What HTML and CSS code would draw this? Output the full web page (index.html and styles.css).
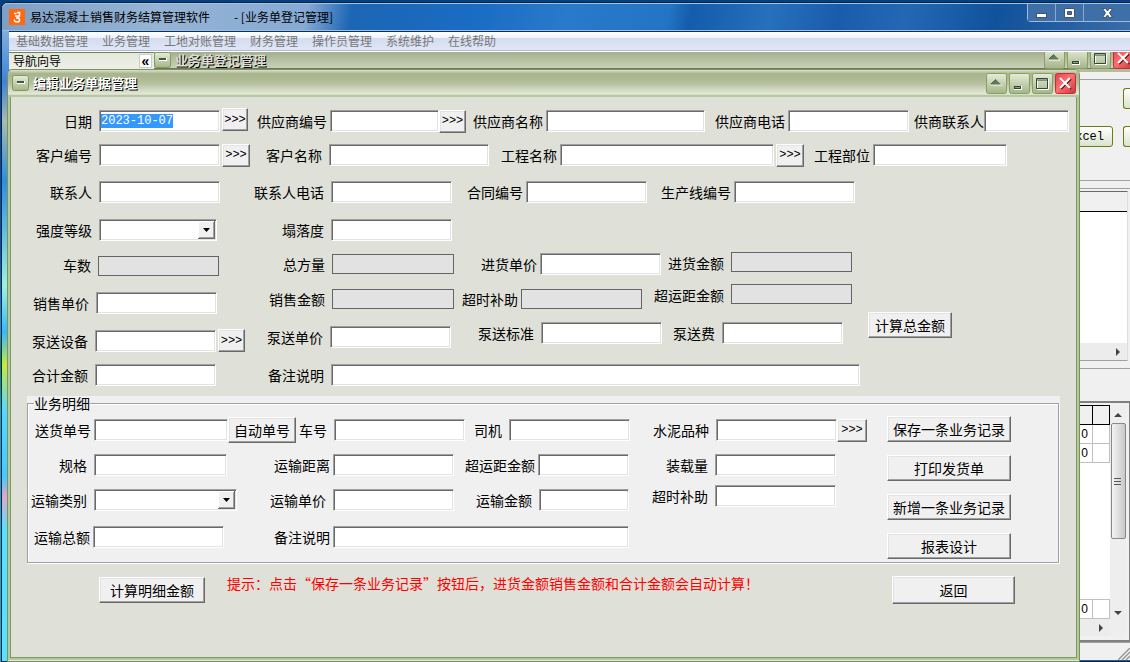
FILE: index.html
```html
<!DOCTYPE html>
<html lang="zh-CN">
<head>
<meta charset="utf-8">
<title>易达混凝土销售财务结算管理软件</title>
<link rel="stylesheet" href="styles.css">
</head>
<body>
<svg width="0" height="0" class="defs" aria-hidden="true">
  <defs>
    <linearGradient id="g-green" x1="0" y1="0" x2="0" y2="1"><stop offset="0" stop-color="#e6ecd9"/><stop offset="1" stop-color="#a5b489"/></linearGradient>
    <linearGradient id="g-red" x1="0" y1="0" x2="1" y2="1"><stop offset="0" stop-color="#e5404a"/><stop offset=".45" stop-color="#ff7070"/><stop offset="1" stop-color="#c83440"/></linearGradient>
    <symbol id="i-menu" viewBox="0 0 17 16"><rect x=".5" y=".5" width="16" height="15" rx="2" fill="url(#g-green)" stroke="#7f9a58"/><rect x="5" y="6" width="8" height="3" fill="#fff"/><rect x="5" y="6" width="7" height="2" fill="#3f5b3f"/></symbol>
    <symbol id="i-roll" viewBox="0 0 21 21"><rect x=".5" y=".5" width="20" height="20" rx="2" fill="url(#g-green)" stroke="#86a05e"/><path d="M5 12h11" stroke="#fff"/><path d="M5 11.500 10 6.500 15 11.500z" fill="#5f7a5c"/><path d="M5 11 10 6.500" stroke="#2f4a34"/></symbol>
    <symbol id="i-min" viewBox="0 0 21 21"><rect x=".5" y=".5" width="20" height="20" rx="2" fill="url(#g-green)" stroke="#86a05e"/><rect x="5" y="13" width="8" height="4" fill="#fff"/><rect x="5" y="13" width="7" height="3" fill="#2f4a34"/><rect x="6" y="14" width="5" height="1" fill="#8aa07e"/></symbol>
    <symbol id="i-max" viewBox="0 0 21 21"><rect x=".5" y=".5" width="20" height="20" rx="2" fill="url(#g-green)" stroke="#86a05e"/><path d="M5.500 6.500h11v10h-11z" fill="none" stroke="#fff"/><path d="M4.500 5.500h11v10h-11zM4.500 7h11" fill="none" stroke="#2f4a34"/></symbol>
    <symbol id="i-close" viewBox="0 0 21 21"><rect x=".5" y=".5" width="20" height="20" rx="2" fill="url(#g-red)" stroke="#c0303c"/><path d="M6 6l10 10M16 6 6 16" stroke="#5c1c20" stroke-width="2"/><path d="M5 5l10 10M15 5 5 15" stroke="#fff" stroke-width="2"/></symbol>
  </defs>
</svg>

<main class="app">
  <header class="app-title">
    <svg class="logo" viewBox="0 0 16 16" aria-hidden="true"><rect width="16" height="16" fill="#ff6a10"/><path d="M5 4.500h2.500M8 3.500h2.500v3.500H6M8 8.500c3 0 3.500 4 .5 4.500-2 .3-3.500-.8-3-2.500M8 7v3" fill="none" stroke="#fff" stroke-width="1.500"/></svg>
    <h1>易达混凝土销售财务结算管理软件</h1>
    <span class="app-doc">- [业务单登记管理]</span>
    <div class="caption">
      <button aria-label="最小化"><svg width="13" height="12"><rect x="1.500" y="6.500" width="10" height="4" fill="#fff" stroke="#44546c"/></svg></button>
      <button aria-label="最大化"><svg width="13" height="12"><path d="M1.500 1.500h10v9h-10zM4.500 4.500h4v3h-4z" fill="#fff" fill-rule="evenodd" stroke="#44546c"/></svg></button>
      <button class="wide" aria-label="关闭"><svg width="13" height="12"><path d="M1.500 1.500h3L6.500 4l2-2.500h3L8.500 6l3 4.500h-3L6.500 8l-2 2.500h-3L4.500 6z" fill="#fff" stroke="#44546c"/></svg></button>
    </div>
  </header>

  <nav class="menu">
    <a href="#">基础数据管理</a><a href="#">业务管理</a><a href="#">工地对账管理</a><a href="#">财务管理</a><a href="#">操作员管理</a><a href="#">系统维护</a><a href="#">在线帮助</a>
  </nav>

  <div class="strip">
    <div class="guide"><span>导航向导</span><button aria-label="收起">«</button></div>
    <div class="child-title">
      <svg class="sys" aria-hidden="true"><use href="#i-menu"/></svg>
      <h2>业务单登记管理</h2>
      <div class="tools">
        <button aria-label="卷起"><svg><use href="#i-roll"/></svg></button>
        <button aria-label="最小化"><svg><use href="#i-min"/></svg></button>
        <button aria-label="最大化"><svg><use href="#i-max"/></svg></button>
        <button aria-label="关闭"><svg><use href="#i-close"/></svg></button>
      </div>
    </div>
  </div>

  <section class="child">
    <div class="child-bar">
      <button class="soft stub" aria-label="查询"></button>
      <div class="bar-line"><button class="soft">Excel</button><button class="soft stub" aria-label="打印"></button></div>
    </div>
    <div class="gap"></div>
    <div class="list">
      <div class="list-head"></div>
      <div class="list-body"></div>
      <div class="hbar"><svg width="6" height="8"><path d="M1 0l4 4-4 4z" fill="#444"/></svg></div>
    </div>
    <div class="gap"></div>
    <div class="detail">
      <div class="detail-main">
        <table>
          <thead><tr><th></th><th></th></tr></thead>
          <tbody><tr><td>0</td><td></td></tr><tr><td>0</td><td></td></tr></tbody>
        </table>
        <table class="total"><tbody><tr><td>0</td><td></td></tr></tbody></table>
        <div class="hbar"><svg width="6" height="8"><path d="M1 0l4 4-4 4z" fill="#444"/></svg></div>
      </div>
      <div class="vbar">
        <svg width="8" height="5"><path d="M0 5l4-4 4 4z" fill="#444"/></svg>
        <div class="thumb"><svg width="8" height="9"><path d="M0 1.500h7M0 4.500h7M0 7.500h7" stroke="#555"/></svg></div>
        <svg width="8" height="5"><path d="M0 0l4 4 4-4z" fill="#444"/></svg>
      </div>
    </div>
    <footer class="status"><svg width="12" height="12"><path d="M0 12 12 0M4 12l8-8M8 12l4-4" stroke="#999" stroke-width="1.500"/></svg></footer>
  </section>
</main>

<section class="dialog">
  <header class="dialog-title">
    <svg class="sys" aria-hidden="true"><use href="#i-menu"/></svg>
    <h2>编辑业务单据管理</h2>
    <div class="tools">
      <button aria-label="卷起"><svg><use href="#i-roll"/></svg></button>
      <button aria-label="最小化"><svg><use href="#i-min"/></svg></button>
      <button aria-label="最大化"><svg><use href="#i-max"/></svg></button>
      <button aria-label="关闭"><svg><use href="#i-close"/></svg></button>
    </div>
  </header>
  <form class="form" onsubmit="return false">
    <div class="row r1">
      <label class="far" for="date">日期</label><input id="date" class="date" value="2023-10-07"><button class="pick high">&gt;&gt;&gt;</button>
      <label for="sup-no">供应商编号</label><input id="sup-no"><button class="pick flush">&gt;&gt;&gt;</button>
      <label for="sup-name">供应商名称</label><input id="sup-name">
      <label for="sup-tel">供应商电话</label><input id="sup-tel">
      <label class="flush" for="sup-man">供商联系人</label><input id="sup-man">
    </div>
    <div class="row r2">
      <label class="far" for="cus-no">客户编号</label><input id="cus-no"><button class="pick">&gt;&gt;&gt;</button>
      <label class="far" for="cus-name">客户名称</label><input id="cus-name">
      <label for="prj">工程名称</label><input id="prj"><button class="pick">&gt;&gt;&gt;</button>
      <label for="part">工程部位</label><input id="part">
    </div>
    <div class="row r3">
      <label class="far" for="man">联系人</label><input id="man">
      <label class="far" for="man-tel">联系人电话</label><input id="man-tel">
      <label for="contract">合同编号</label><input id="contract">
      <label for="line">生产线编号</label><input id="line">
    </div>
    <div class="row r4">
      <label class="far" for="grade">强度等级</label><select id="grade"><option></option></select>
      <label class="far" for="slump">塌落度</label><input id="slump">
    </div>
    <div class="row r5">
      <label class="far low" for="cars">车数</label><input id="cars" class="low" disabled>
      <label class="far" for="volume">总方量</label><input id="volume" disabled>
      <label for="buy-price">进货单价</label><input id="buy-price">
      <label class="far high" for="buy-sum">进货金额</label><input id="buy-sum" class="high" disabled>
    </div>
    <div class="pair">
      <div class="pair-rows">
        <div class="row r6">
          <label class="far low" for="sell-price">销售单价</label><input id="sell-price" class="low">
          <label class="far" for="sell-sum">销售金额</label><input id="sell-sum" disabled>
          <label for="over">超时补助</label><input id="over" disabled>
          <label class="far high" for="far-sum">超运距金额</label><input id="far-sum" class="high" disabled>
        </div>
        <div class="row r7">
          <label class="far low" for="pump">泵送设备</label><input id="pump" class="low"><button class="pick low">&gt;&gt;&gt;</button>
          <label class="far" for="pump-price">泵送单价</label><input id="pump-price">
          <label class="far high" for="pump-std">泵送标准</label><input id="pump-std" class="high">
          <label class="far high" for="pump-fee">泵送费</label><input id="pump-fee" class="high">
        </div>
      </div>
      <button class="calc">计算总金额</button>
    </div>
    <div class="row r8">
      <label class="far" for="total">合计金额</label><input id="total">
      <label class="far" for="note">备注说明</label><input id="note">
    </div>

    <div class="group">
      <fieldset>
        <legend>业务明细</legend>
        <div class="group-body">
          <div class="group-rows">
            <div class="row ga">
              <label for="bill">送货单号</label><input id="bill"><button>自动单号</button>
              <label class="far" for="car">车号</label><input id="car">
              <label class="far" for="driver">司机</label><input id="driver">
              <label class="far" for="cement">水泥品种</label><input id="cement"><button class="pick flush">&gt;&gt;&gt;</button>
            </div>
            <div class="row gb">
              <label class="far" for="spec">规格</label><input id="spec">
              <label for="dist">运输距离</label><input id="dist">
              <label for="far2">超运距金额</label><input id="far2">
              <label class="far" for="load">装载量</label><input id="load">
            </div>
            <div class="row gc">
              <label class="far" for="kind">运输类别</label><select id="kind"><option></option></select>
              <label class="far" for="ship-price">运输单价</label><input id="ship-price">
              <label class="far" for="ship-sum">运输金额</label><input id="ship-sum">
              <label class="far high" for="over2">超时补助</label><input id="over2" class="high">
            </div>
            <div class="row gd">
              <label for="ship-total">运输总额</label><input id="ship-total">
              <label for="note2">备注说明</label><input id="note2">
            </div>
          </div>
          <div class="actions">
            <button>保存一条业务记录</button>
            <button>打印发货单</button>
            <button>新增一条业务记录</button>
            <button>报表设计</button>
          </div>
        </div>
      </fieldset>
    </div>

    <div class="bottom">
      <button class="calc-detail">计算明细金额</button>
      <p>提示：点击“保存一条业务记录”按钮后，进货金额销售金额和合计金额会自动计算！</p>
      <button class="back">返回</button>
    </div>
  </form>
</section>
<script src="app.js"></script>
</body>
</html>
```
FILE: app.js
```js
const date = document.getElementById('date');
date.focus();
date.select();
```
FILE: styles.css
```css
* { box-sizing: border-box; }
body {
  margin: 0;
  height: 100vh;
  overflow: hidden;
  position: relative;
  background: linear-gradient(#04407f 0%, #0a4fae 38%, #1c96c8 50%, #128040 54%, #1f9cc4 62%, #2aa0c8 100%);
  font: 14px/16px "Noto Sans CJK SC", sans-serif;
  color: #000;
}
.defs { position: absolute; }
h1, h2, p { margin: 0; font-weight: normal; }
button { font: inherit; color: inherit; padding: 0; margin: 0; border: 0; background: none; }

/* Main window */
.app {
  position: absolute;
  inset: 2px 0 0 1px;
  padding-left: 7px;
  display: flex;
  flex-direction: column;
  border: 1px solid #0a2440;
  border-right: 0;
  border-radius: 6px 0 0 0;
  background: linear-gradient(#a8c4e0 0, #3c84d8 12%, #a8bcb0 18%, #2a90e0 27%, #a0f0d8 43%, #38b8ff 50%, #c8e840 55%, #58d8ff 62%, #48c8ff 72%, #e0a8c8 75%, #58e0ff 80%, #5ce0ff 100%);
}
.app-title {
  height: 28px;
  flex: none;
  margin-left: -7px;
  padding-left: 7px;
  display: flex;
  align-items: center;
  border-top: 1px solid #9cc4e8;
  border-bottom: 1px solid #9cc0e4;
  border-radius: 6px 0 0 0;
  background: linear-gradient(100deg, #7e9fc4 0, #96b4d4 14%, #86aad4 27%, #1c66b4 31%, #1a6cc4 42%, #2a7acb 50%, #2474c4 59%, #145cac 61%, #2670bc 68%, #1a5cac 74%, #2468b4 80%, #10529c 88%, #3a6ca8 100%);
  font-size: 12px;
}
.logo { width: 16px; height: 16px; margin-right: 5px; }
.app-title h1 { font-size: 12px; }
.app-doc { margin-left: 24px; }
.caption {
  display: flex;
  align-self: flex-start;
  margin-left: auto;
  border: 1px solid #a0bcdc;
  border-top: 0;
  border-right: 0;
  border-radius: 0 0 0 4px;
}
.caption button {
  width: 28px;
  height: 17px;
  display: grid;
  place-items: center;
  border-right: 1px solid #88a8cc;
  background: #3f6fa8;
}
.caption .wide { width: 46px; border: 0; }
.menu {
  height: 20px;
  flex: none;
  display: flex;
  align-items: center;
  gap: 14px;
  padding-left: 7px;
  border-top: 1px solid #10305c;
  border-bottom: 1px solid #b0b8d4;
  background: linear-gradient(#fff 0, #eef1f8 35%, #d4dcef 36%, #e0e6f6 100%);
  font-size: 12px;
}
.menu a { color: #777; text-decoration: none; }
.strip { display: flex; height: 18px; flex: none; border-top: 1px solid #fff; }
.guide {
  width: 145px;
  padding: 0 2px 0 4px;
  display: flex;
  align-items: center;
  justify-content: space-between;
  background: linear-gradient(#e4e8dc, #eef0e8);
  border-top: 1px solid #6c8454;
  font-size: 12px;
}
.guide button { width: 13px; height: 14px; background: #fff; border: 1px solid #ccc; font: bold 14px/8px "Liberation Sans", sans-serif; }
.child-title, .dialog-title { display: flex; align-items: center; }
.child-title {
  flex: 1;
  background: linear-gradient(#a4b08c, #c8d0b8);
  border-bottom: 1px solid #6c7c50;
}
.sys { width: 17px; height: 16px; }
h2 { font-size: 13px; margin-left: 4px; font-weight: bold; color: #fff; text-shadow: 1px 1px 0 #000; }
.child-title h2 { color: #dcdcd4; }
.tools { margin-left: auto; display: flex; gap: 2px; }
.tools button, .tools svg { display: block; width: 21px; height: 21px; }
.child-title .tools { height: 17px; margin-right: -4px; align-items: flex-end; overflow: hidden; }

/* Registration window behind the dialog */
.child {
  flex: 1;
  display: flex;
  flex-direction: column;
  align-items: stretch;
  background: #f0f0f0;
  border-top: 3px solid #b4bc9c;
}
.child-bar { height: 102px; margin-top: 7px; padding-top: 8px; border-top: 1px solid #a0a0a0; border-bottom: 1px solid #a0a0a0; display: flex; flex-direction: column; align-items: flex-end; gap: 17px; }
.bar-line { display: flex; gap: 10px; }
.soft { height: 21px; width: 60px; padding-right: 8px; text-align: right; border: 1px solid #6c7c10; border-radius: 3px; background: linear-gradient(#fff, #d8e4cc); font: 12px "Liberation Mono", monospace; }
.stub { width: 7px; padding: 0; border-right: 0; border-radius: 3px 0 0 3px; }
.gap { height: 8px; border-bottom: 1px solid #a0a0a0; }
.list { height: 170px; margin: 2px 2px 0 0; border-top: 1px solid #696969; border-right: 1px solid #ddd; display: flex; flex-direction: column; border-bottom: 1px solid #a0a0a0; }
.list-head { height: 20px; border-bottom: 1px solid #000; background: #f0f0f0; }
.list-body { flex: 1; background: #fff; }
.hbar { height: 17px; display: flex; align-items: center; justify-content: flex-end; padding-right: 6px; background: #ececec; }
.detail { flex: 1; margin-top: 32px; border: 2px solid #808080; display: flex; min-height: 0; padding: 2px 3px 4px 0; border-right: 1px solid #808080; }
.detail-main { flex: 1; display: flex; flex-direction: column; background: #fff; }
table { width: 100%; border-collapse: collapse; table-layout: fixed; font: 12px "Liberation Sans", sans-serif; }
th, td { height: 19px; padding: 0 4px; text-align: right; border: 1px solid #c0c0c0; }
th { background: #f0f0f0; border: 1px solid #000; }
th:last-child, td:last-child { width: 17px; }
.total { margin-top: auto; border-top: 1px solid #000; }
.vbar { width: 16px; display: flex; flex-direction: column; align-items: center; padding: 7px 0 20px; background: #eee; }
.thumb { width: 15px; height: 116px; margin: 6px 0 auto; display: grid; place-items: center; border: 1px solid #888; border-radius: 2px; background: linear-gradient(90deg, #f4f4f4, #c8c8cc); }
.status { height: 19px; display: flex; justify-content: flex-end; align-items: flex-end; border-top: 1px solid #a0a0a0; border-bottom: 1px solid #2060a0; }

/* Edit dialog */
.dialog {
  position: absolute;
  inset: 69px 50px 0 7px;
  display: flex;
  flex-direction: column;
  border: 1px solid #7c9060;
  border-radius: 6px 6px 0 0;
  background: #e4e8dc;
  overflow: hidden;
}
.dialog-title {
  height: 27px;
  flex: none;
  padding: 0 3px 0 4px;
  border-bottom: 1px solid #7c9060;
  background: linear-gradient(#dce0d0 0, #a8b48c 14%, #b4bf9c 50%, #e4e8d8 92%, #b8c4a0 100%);
}
.form {
  flex: 1;
  margin: 0 2px 3px 2px;
  padding: 7px 0 0;
  border: 1px solid #7c9c5c;
  border-top: 0;
  box-shadow: 0 0 0 2px #b4c8a0;
  background: #dfe0d8;
}
.row { display: grid; grid-auto-rows: 1fr; align-items: center; padding: 4px 0; }
.row label { text-align: right; padding-right: 3px; white-space: nowrap; }
.row .far { padding-right: 7px; }
.row label.flush { padding-right: 0; }
.row .low { align-self: end; }
.row .high { align-self: start; }
.row label.low, .row label.high { line-height: 22px; }

input, select {
  width: 100%;
  min-width: 0;
  height: 22px;
  margin: 0;
  padding: 0 1px;
  border: 1px solid;
  border-color: #a0a0a0 #fff #fff #a0a0a0;
  border-radius: 0;
  box-shadow: inset 1px 1px 0 #696969, inset -1px -1px 0 #e3e3e3;
  background: #fff;
  outline: 0;
  font: 12px "Liberation Mono", monospace;
}
input:disabled { height: 20px; border-color: #646464; background: #e2e2e2; box-shadow: none; }
.date::selection { background: #3399ff; color: #fff; }
select {
  appearance: none;
  background:
    url("data:image/svg+xml,%3Csvg xmlns='http://www.w3.org/2000/svg' width='17' height='18'%3E%3Cpath fill='%23696969' d='M0 0h17v18H0z'/%3E%3Cpath fill='%23fff' d='M0 0h16v17H0z'/%3E%3Cpath fill='%23a0a0a0' d='M1 1h15v16H1z'/%3E%3Cpath fill='%23f0f0f0' d='M1 1h14v15H1z'/%3E%3Cpath d='M5 7h7l-3.500 4z'/%3E%3C/svg%3E") right 1px center no-repeat #fff;
}
.form button {
  height: 26px;
  border: 1px solid;
  border-color: #fff #696969 #696969 #fff;
  box-shadow: inset -1px -1px 0 #a0a0a0, inset 1px 1px 0 #e3e3e3;
  background: #f0f0f0;
  line-height: 16px;
  white-space: nowrap;
}
.form .pick { height: 23px; margin-left: 2px; font: 12px "Liberation Mono", monospace; }
.form .flush { margin-left: 0; }

.r1 { height: 34px; grid-template-columns: 88px 121px 28px 82px 109px 27px 80px 159px 83px 121px 75px 85px; }
.r2 { height: 34px; grid-template-columns: 88px 121px 30px 79px 160px 71px 214px 30px 69px 134px; }
.r3 { height: 40px; grid-template-columns: 88px 121px 111px 121px 74px 121px 87px 121px; }
.r4 { height: 36px; grid-template-columns: 88px 118px 114px 121px; }
.r5 { height: 32px; grid-template-columns: 87px 121px 113px 122px 86px 121px 70px 121px; }
.r6 { height: 38px; grid-template-columns: 85px 121px 115px 122px 67px 121px 89px 121px; }
.r7 { height: 38px; grid-template-columns: 84px 121px 29px 85px 121px 90px 121px 60px 121px; }
.r8 { height: 38px; grid-template-columns: 84px 121px 115px 529px; }
.pair { display: flex; gap: 16px; }
.pair .calc { width: 84px; align-self: flex-end; margin-bottom: 18px; }

.group { margin: 2px 16px 0 16px; padding: 0 1px 1px 0; background: #f0f0f0; }
fieldset {
  margin: 0;
  padding: 0 0 3px;
  border: 1px solid #a0a0a0;
  box-shadow: 1px 1px 0 #fff, inset 1px 1px 0 #fff;
}
legend { margin-left: 6px; padding: 0; line-height: 14px; background: #f0f0f0; }
.group-body { display: flex; gap: 20px; padding-top: 1px; }
.ga { height: 38px; grid-template-columns: 66px 134px 68px 38px 131px 44px 121px 86px 121px 30px; }
.gb { height: 32px; grid-template-columns: 66px 133px 106px 121px 84px 91px 86px 121px; }
.gc { height: 38px; grid-template-columns: 66px 143px 96px 121px 85px 90px 86px 121px; }
.gd { height: 36px; grid-template-columns: 65px 131px 109px 296px; }
.actions { display: flex; flex-direction: column; gap: 13px; padding-top: 5px; }
.actions button { width: 124px; }

.bottom { display: flex; align-items: center; padding: 12px 61px 0 88px; }
.bottom p { margin-left: 22px; color: #f00; white-space: nowrap; line-height: 14px; align-self: flex-start; }
.bottom .calc-detail { width: 106px; }
.form .back { width: 123px; height: 28px; margin-left: auto; }
```
